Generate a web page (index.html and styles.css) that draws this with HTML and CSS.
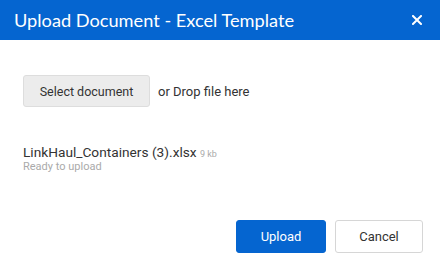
FILE: index.html
```html
<!DOCTYPE html>
<html lang="en">
<head>
  <meta charset="UTF-8">
  <title>Upload Document - Excel Template</title>
  <link rel="stylesheet" href="styles.css">
</head>
<body>
  <div class="modal">
    <div class="modal-header">
      <h1>Upload Document - Excel Template</h1>
      <svg class="close" width="10" height="10" viewBox="0 0 10 10">
        <path d="M1 1L9 9M9 1L1 9" stroke="#fff" stroke-width="2" stroke-linecap="square"/>
      </svg>
    </div>

    <div class="modal-body">
      <div class="picker">
        <button class="btn btn-select">Select document</button>
        <span class="drop">or Drop file here</span>
      </div>

      <div class="file">
        <div class="file-name">LinkHaul_Containers (3).xlsx <small>9 kb</small></div>
        <div class="file-status">Ready to upload</div>
      </div>
    </div>

    <div class="modal-footer">
      <button class="btn btn-primary">Upload</button>
      <button class="btn btn-cancel">Cancel</button>
    </div>
  </div>
</body>
</html>
```

FILE: styles.css
```css
body {
  margin: 0;
  font-family: Roboto, 'Liberation Sans', sans-serif;
  background-color: #fff;
  color: #333;
}

.modal { width: 440px; height: 263px; display: flex; flex-direction: column; }

.modal-header {
  height: 40px;
  background-color: #0565d0;
  color: #fff;
  display: flex;
  align-items: center;
  justify-content: space-between;
  padding: 0 18px 0 14px;
}
.modal-header h1 {
  margin: 0;
  font-family: Lato, sans-serif;
  font-weight: 400;
  font-size: 18.2px;
}
.close { display: block; }

.modal-body { flex: 1; padding: 35px 23px 0; }
.picker { display: flex; align-items: center; gap: 8px; }
.drop { font-size: 13px; color: #333; }

.btn {
  font-family: Roboto, sans-serif;
  font-size: 13px;
  border-radius: 3px;
  cursor: pointer;
}
.btn-select {
  width: 127px;
  height: 32px;
  font-size: 12.5px;
  background-color: #ececec;
  border: 1px solid #ddd;
  color: #333;
}

.file { margin-top: 37px; }
.file-name { font-size: 13.7px; color: #333; }
.file-name small { font-size: 9px; color: #aaa; }
.file-status { font-size: 11px; color: #aaa; }

.modal-footer {
  display: flex;
  justify-content: flex-end;
  gap: 9px;
  padding: 0 17px 10px 0;
}
.btn-primary {
  width: 90px;
  height: 33px;
  background-color: #0565d0;
  border: 1px solid #0565d0;
  color: #fff;
}
.btn-cancel {
  width: 88px;
  height: 33px;
  background-color: #fff;
  border: 1px solid #d6d6d6;
  color: #333;
}
```
